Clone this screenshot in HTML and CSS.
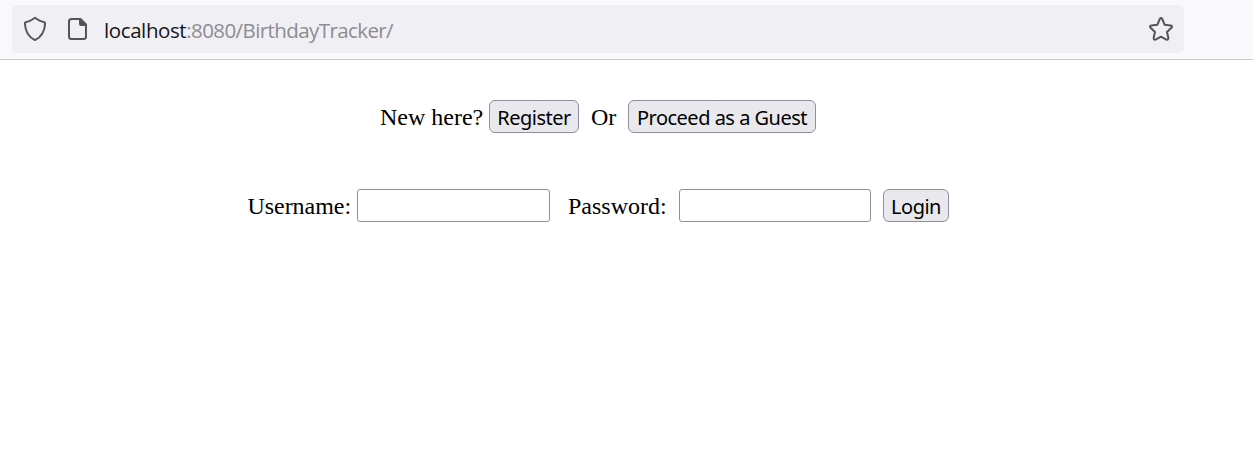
FILE: index.html
```html
<!DOCTYPE html>
<html lang="en">
<head>
<meta charset="utf-8">
<title>BirthdayTracker</title>
<link rel="stylesheet" href="styles.css">
</head>
<body>
<header class="toolbar">
  <div class="urlbar">
    <svg class="icon" width="24" height="26" viewBox="0 0 24 26"><path d="M12 1.700 Q17.500 5.500 21.300 6.200 Q22.200 6.400 22.100 7.500 C21.700 15 18.600 21.100 12 24.100 C5.400 21.100 2.300 15 1.900 7.500 Q1.800 6.400 2.700 6.200 Q6.500 5.500 12 1.700Z"/></svg>
    <svg class="icon page" width="20" height="24" viewBox="0 0 20 24"><path d="M3.500 2H12.500L18 7.500V19.500Q18 22 15.500 22H3.500Q1 22 1 19.500V4.500Q1 2 3.500 2Z"/><path class="fold" d="M11 2H12.500L18 7.500V9H13Q11 9 11 7Z"/></svg>
    <span class="url"><span class="host">localhost</span>:8080/BirthdayTracker/</span>
    <svg class="icon star" width="26" height="26" viewBox="0 0 26 26"><path d="M11.800 3Q13 1.200 14.200 3L16.700 8.800L22.600 9.400Q25 10 23.400 11.800L19 16L20.400 22Q20.300 24.200 18.400 23.600L13 20.700L7.600 23.600Q5.700 24.200 5.600 22L7 16L2.600 11.800Q1 10 3.400 9.400L9.300 8.800Z"/></svg>
  </div>
</header>
<main class="content">
  <div class="row guest">
    <span class="text new">New here?</span>
    <button class="btn register">Register</button>
    <span class="text or">Or</span>
    <button class="btn proceed">Proceed as a Guest</button>
  </div>
  <form class="row login">
    <label class="text user" for="u">Username:</label>
    <input class="field" id="u" type="text">
    <label class="text pass" for="p">Password:</label>
    <input class="field second" id="p" type="password">
    <button class="btn submit" type="button">Login</button>
  </form>
</main>
</body>
</html>
```
FILE: styles.css
```css
* { box-sizing: border-box; }
body { margin: 0; background: #fff; color: #000; }
.toolbar { width: 1253px; height: 60px; padding: 5px 0 0 12px; background: #f9f9fb; border-bottom: 1px solid #ccc; }
.urlbar { display: flex; align-items: center; width: 1172px; height: 48px; padding: 0 10px 0 11px; border-radius: 5px; background: #f0eff4; }
.icon { flex: none; fill: none; stroke: #55545a; stroke-width: 2; stroke-linejoin: round; }
.page { margin-left: 21px; }
.icon .fold { fill: #55545a; stroke: none; }
.url { margin-left: 16px; padding-top: 2px; font: 20.5px/28px "Open Sans", sans-serif; letter-spacing: -0.59px; color: #8d8c92; white-space: nowrap; }
.host { color: #15141a; letter-spacing: -0.4px; }
.star { margin-left: auto; }
.content { display: flex; flex-direction: column; gap: 56px; padding-top: 40px; }
.row { display: flex; height: 33px; margin: 0; }
.guest { padding-left: 380px; }
.login { padding-left: 247.5px; }
.text { font: 24px/34px "Liberation Serif", serif; white-space: nowrap; }
.new { width: 109px; }
.or { width: 49px; padding-left: 12px; }
.user { width: 109.5px; letter-spacing: -0.05px; }
.pass { width: 129px; padding-left: 18px; }
.btn { height: 33px; padding: 3px 0 0; border: 1px solid #8f8f9d; border-radius: 6px; background: #e9e9ed; color: #000; font: 20px/28px "Noto Sans", sans-serif; letter-spacing: -0.5px; white-space: nowrap; }
.register { width: 90px; }
.proceed { width: 188px; }
.submit { width: 66px; margin-left: 12px; }
.field { width: 193px; height: 33px; padding: 2px; border: 1px solid #8f8f9d; border-radius: 3px; background: #fff; }
.second { width: 192px; }
```
